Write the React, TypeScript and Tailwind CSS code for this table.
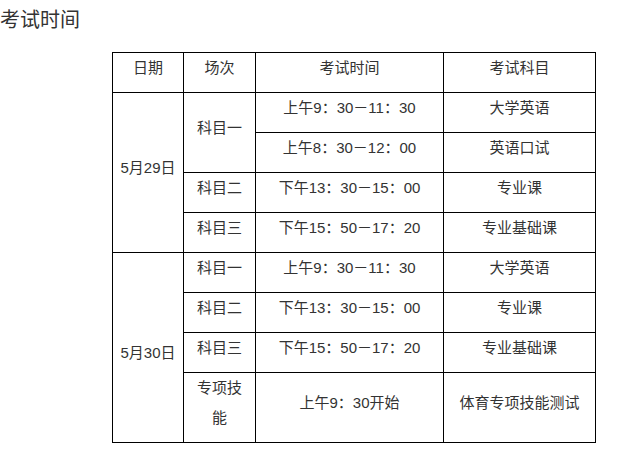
import React from 'react'

const font = { fontFamily: '"Liberation Sans", "Noto Sans CJK SC", sans-serif' }

const cell = 'border border-black text-center align-middle leading-[30px] p-0 pb-[9px]'

interface Row {
  date?: { text: string; span: number; extra?: string }
  session?: { text: React.ReactNode; span: number }
  time: string
  subject: string
  tall?: boolean
}

const rows: Row[] = [
  { date: { text: '5月29日', span: 4 }, session: { text: '科目一', span: 2 }, time: '上午9：30－11：30', subject: '大学英语' },
  { time: '上午8：30－12：00', subject: '英语口试' },
  { session: { text: '科目二', span: 1 }, time: '下午13：30－15：00', subject: '专业课' },
  { session: { text: '科目三', span: 1 }, time: '下午15：50－17：20', subject: '专业基础课' },
  { date: { text: '5月30日', span: 4, extra: 'pt-[20px]' }, session: { text: '科目一', span: 1 }, time: '上午9：30－11：30', subject: '大学英语' },
  { session: { text: '科目二', span: 1 }, time: '下午13：30－15：00', subject: '专业课' },
  { session: { text: '科目三', span: 1 }, time: '下午15：50－17：20', subject: '专业基础课' },
  {
    session: { text: <>专项技<br />能</>, span: 1 },
    time: '上午9：30开始',
    subject: '体育专项技能测试',
    tall: true,
  },
]

export default function App() {
  return (
    <div className="w-[628px] h-[450px] bg-white text-[#333]" style={font}>
      <div className="pt-[10px] text-[20px] leading-[20px]">考试时间</div>
      <table className="mt-[22px] ml-[112px] border-collapse table-fixed text-[15px]">
        <colgroup>
          <col className="w-[71px]" />
          <col className="w-[72px]" />
          <col className="w-[188px]" />
          <col className="w-[152px]" />
        </colgroup>
        <thead>
          <tr className="h-[40px]">
            <th className={`${cell} font-normal`}>日期</th>
            <th className={`${cell} font-normal`}>场次</th>
            <th className={`${cell} font-normal`}>考试时间</th>
            <th className={`${cell} font-normal`}>考试科目</th>
          </tr>
        </thead>
        <tbody>
          {rows.map((r, i) => (
            <tr key={i} className={r.tall ? 'h-[70px]' : 'h-[40px]'}>
              {r.date && (
                <td rowSpan={r.date.span} className={`${cell} ${r.date.extra ?? ''}`}>
                  {r.date.text}
                </td>
              )}
              {r.session && (
                <td rowSpan={r.session.span} className={cell}>
                  {r.session.text}
                </td>
              )}
              <td className={cell}>{r.time}</td>
              <td className={cell}>{r.subject}</td>
            </tr>
          ))}
        </tbody>
      </table>
    </div>
  )
}
